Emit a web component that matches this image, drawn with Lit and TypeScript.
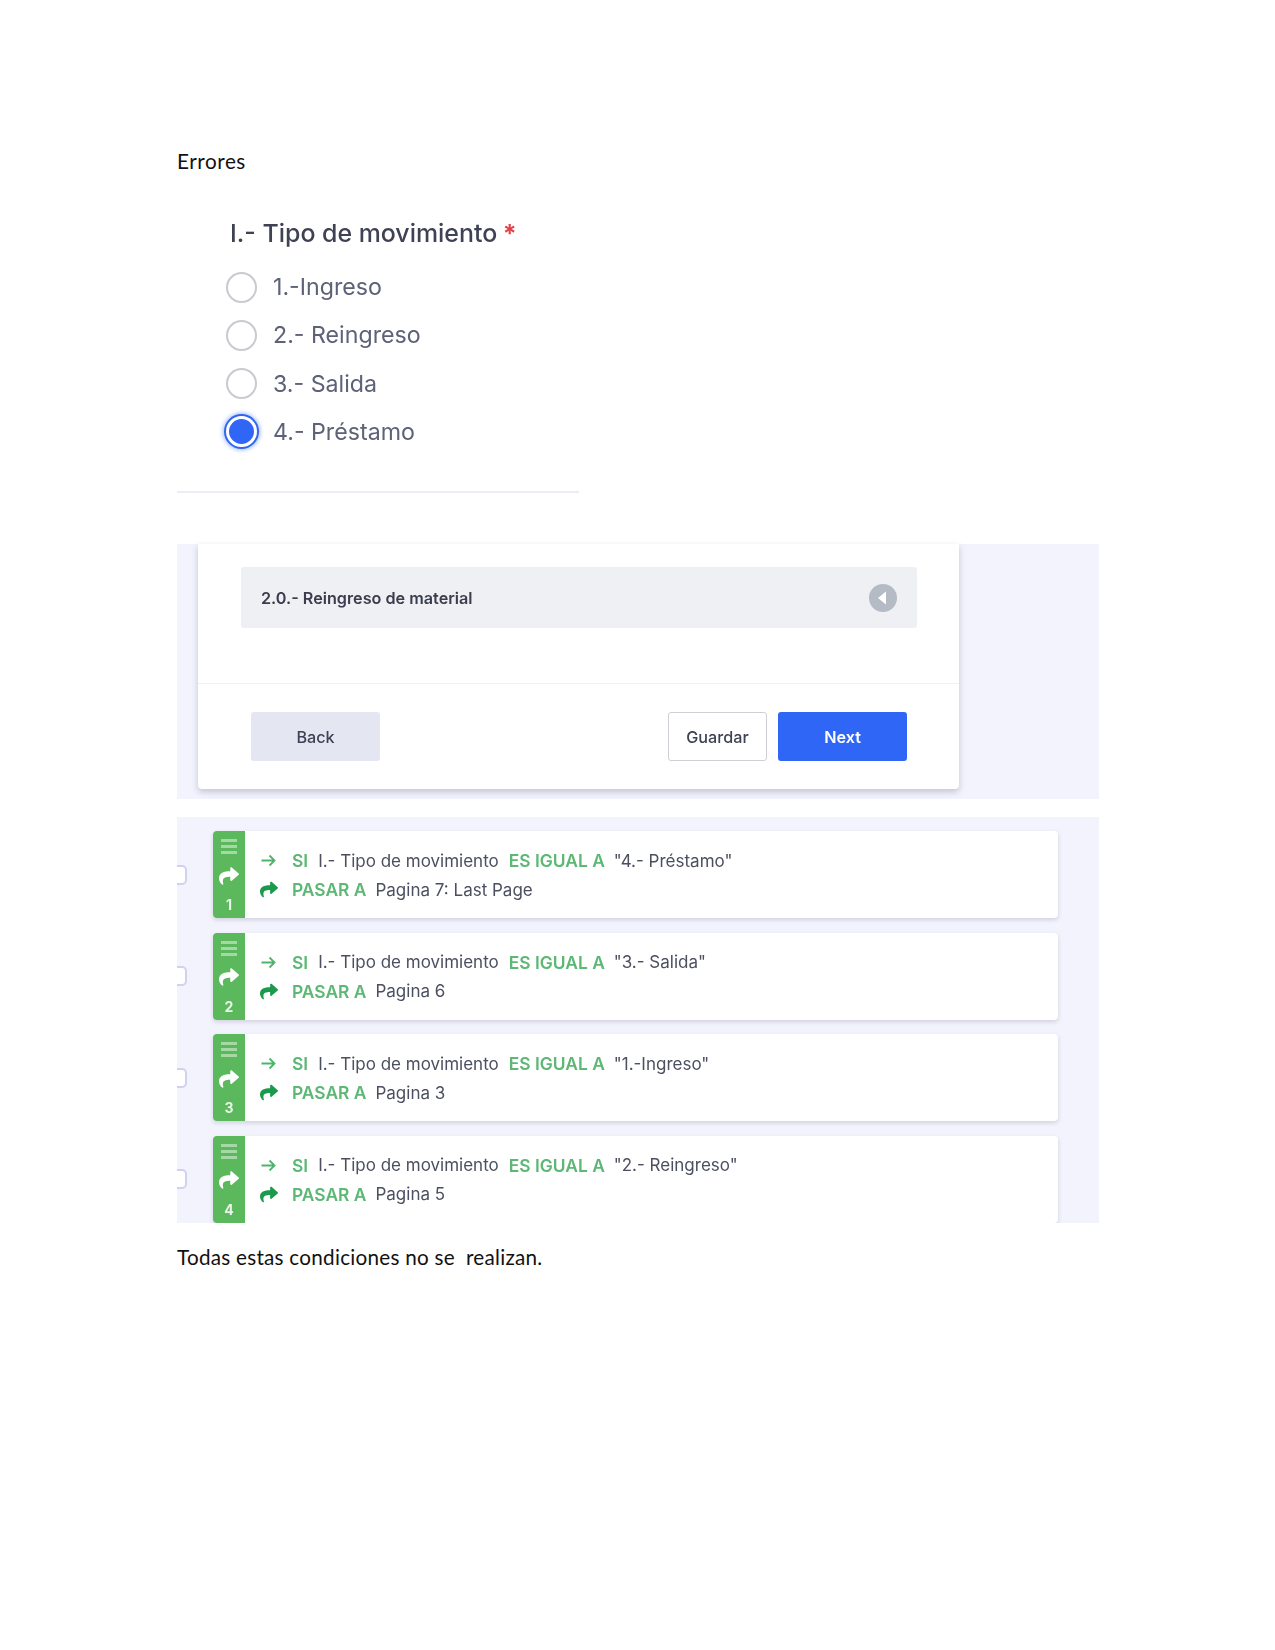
import { LitElement, html, css, svg } from "lit";
import { customElement } from "lit/decorators.js";

const share = (size: number, color: string) => html`<svg class="share" width="${size}" height="${size}" viewBox="0 0 512 512" style="color:${color}"><path fill="currentColor" d="M503.7 189.8 327.7 37.9C312.3 24.6 288 35.4 288 56v80.1C127.400 137.900 0 170.100 0 322.300c0 61.400 39.600 122.300 83.300 154.100 13.700 9.900 33.100-2.500 28.100-18.600C66 312 132.900 274.300 288 272.100V360c0 20.700 24.300 31.400 39.700 18.200l176-152c11.100-9.600 11.100-26.800 0-36.400z"/></svg>`;

const arrow = svg`<path d="M1 7.500h13M9 2.500l5 5-5 5" fill="none" stroke="currentColor" stroke-width="1.800"/>`;

const rules = [
  { n: 1, value: '"4.- Préstamo"', page: "Pagina 7: Last Page" },
  { n: 2, value: '"3.- Salida"', page: "Pagina 6" },
  { n: 3, value: '"1.-Ingreso"', page: "Pagina 3" },
  { n: 4, value: '"2.- Reingreso"', page: "Pagina 5" },
];

const options = [
  { label: "1.-Ingreso", on: false },
  { label: "2.- Reingreso", on: false },
  { label: "3.- Salida", on: false },
  { label: "4.- Préstamo", on: true },
];

@customElement("app-root")
export class AppRoot extends LitElement {
  static styles = css`
    :host { display: block; width: 1275px; height: 1650px; background: #fff; font-family: Inter, "Liberation Sans", sans-serif; color: #3f4254; overflow: hidden; }
    .page { display: flex; flex-direction: column; padding: 147px 176px 0 177px; width: 922px; }
    .doc { font-family: Lato, "Open Sans", sans-serif; font-size: 20.7px; line-height: 28px; color: #111; letter-spacing: 0.25px; white-space: pre; }
    .head { letter-spacing: 0.55px; }
    .question { margin-top: 41px; padding-left: 53px; filter: blur(0.5px); }
    .q-title { font-size: 24.9px; font-weight: 500; line-height: 34px; color: #3f4254; }
    .req { color: #e0434b; font-weight: 700; margin-left: -1px; }
    .opts { display: flex; flex-direction: column; margin-top: 21px; margin-left: -4px; gap: 16.3px; }
    .opt { display: flex; align-items: center; gap: 16px; height: 32px; font-size: 23.2px; color: #5e6278; }
    .radio { width: 31px; height: 31px; box-sizing: border-box; border: 2px solid #c9c9cf; border-radius: 50%; background: #fff; flex: none; }
    .radio.on { background: #2f66f6; border: 3px solid #fff; box-shadow: 0 0 0 2px #2f66f6, 0 0 4px 3px rgba(47,102,246,.45); }
    .rule { height: 2px; width: 402px; background: #ececf2; margin-top: 43.5px; }
    .panel-a { margin-top: 51px; height: 255px; background: #f3f3fd; padding-left: 21px; padding-right: 140px; box-sizing: border-box; filter: blur(0.5px); }
    .card { background: #fff; height: 245px; width: 761px; border-radius: 0 0 4px 4px; box-shadow: 0 3px 6px rgba(60,60,90,.25); display: flex; flex-direction: column; }
    .acc { margin: 23px 42px 0 43px; height: 61px; background: #eef0f3; border-radius: 3px; display: flex; align-items: center; justify-content: space-between; padding: 0 20px; font-size: 16.2px; font-weight: 600; color: #3a3d4d; }
    .foot { margin-top: 55px; border-top: 1px solid #eff0f4; padding: 28px 52px 0 53px; display: flex; gap: 11px; }
    .btn { height: 49px; border-radius: 3px; display: flex; align-items: center; justify-content: center; font-size: 16.2px; font-weight: 500; box-sizing: border-box; }
    .back { width: 129px; background: #e4e6f1; color: #3f4254; margin-right: auto; }
    .save { width: 99px; background: #fff; border: 1px solid #cfd0d6; color: #3f4254; }
    .next { width: 129px; background: #2f66f6; color: #fff; font-weight: 600; }
    .panel-b { margin-top: 18px; height: 406px; background: #f3f3fd; padding-top: 14px; box-sizing: border-box; display: flex; flex-direction: column; gap: 14.5px; filter: blur(0.5px); overflow: hidden; }
    .row { display: flex; align-items: center; height: 87px; flex: none; }
    .stub { width: 10px; height: 20px; box-sizing: border-box; border: 2.5px solid #d0d1ee; border-left: none; border-radius: 0 5px 5px 0; background: #fff; flex: none; margin-right: 26px; }
    .item { width: 845px; height: 87px; display: flex; background: #fff; border-radius: 4px; box-shadow: 0 2px 4px rgba(60,60,90,.18); overflow: hidden; }
    .side { width: 32px; flex: none; background: #5cb85c; display: flex; flex-direction: column; align-items: center; justify-content: space-between; padding: 8px 0 5px; box-sizing: border-box; color: #fff; }
    .bars { display: flex; flex-direction: column; gap: 3px; }
    .bars i { display: block; width: 16px; height: 3px; background: #a5d8a5; }
    .num { font-size: 14px; font-weight: 700; line-height: 16px; color: #e8f5e8; }
    .body { padding: 1px 0 0 15px; display: flex; flex-direction: column; justify-content: center; gap: 6px; font-size: 17px; color: #4b4f60; }
    .line { display: flex; align-items: center; height: 23px; white-space: pre; }
    .ic { width: 18px; margin-right: 14px; display: flex; color: #4cb56a; flex: none; }
    .k { color: #5cb874; font-weight: 600; font-size: 17.4px; }
    .g1 { margin-left: 10px; }
    .g2 { margin-left: 10px; }
    .g3 { margin-left: 9px; }
    .share { display: block; }
    .tail { margin-top: 20px; }
  `;

  render() {
    return html`
      <div class="page">
        <div class="doc head">Errores</div>
        <section class="question">
          <div class="q-title">I.- Tipo de movimiento <span class="req">*</span></div>
          <div class="opts">
            ${options.map((o) => html`<div class="opt"><span class="radio ${o.on ? "on" : ""}"></span><span>${o.label}</span></div>`)}
          </div>
        </section>
        <div class="rule"></div>
        <section class="panel-a">
          <div class="card">
            <div class="acc">
              <span>2.0.- Reingreso de material</span>
              <svg width="28" height="28" viewBox="0 0 28 28"><circle cx="14" cy="14" r="14" fill="#b5bbc5"/><path d="M17 7.500v13l-8-6.500z" fill="#fff"/></svg>
            </div>
            <div class="foot">
              <div class="btn back">Back</div>
              <div class="btn save">Guardar</div>
              <div class="btn next">Next</div>
            </div>
          </div>
        </section>
        <section class="panel-b">
          ${rules.map((r) => html`
            <div class="row">
              <span class="stub"></span>
              <div class="item">
                <div class="side">
                  <div class="bars"><i></i><i></i><i></i></div>
                  ${share(20, "#fff")}
                  <span class="num">${r.n}</span>
                </div>
                <div class="body">
                  <div class="line"><span class="ic"><svg width="16" height="15" viewBox="0 0 15 15">${arrow}</svg></span><span class="k">SI</span><span class="g1">I.- Tipo de movimiento</span><span class="k g2">ES IGUAL A</span><span class="g3">${r.value}</span></div>
                  <div class="line"><span class="ic">${share(19, "#1a9a4a")}</span><span class="k">PASAR A</span><span class="g3">${r.page}</span></div>
                </div>
              </div>
            </div>`)}
        </section>
        <div class="doc tail">Todas estas condiciones no se  realizan.</div>
      </div>
    `;
  }
}
